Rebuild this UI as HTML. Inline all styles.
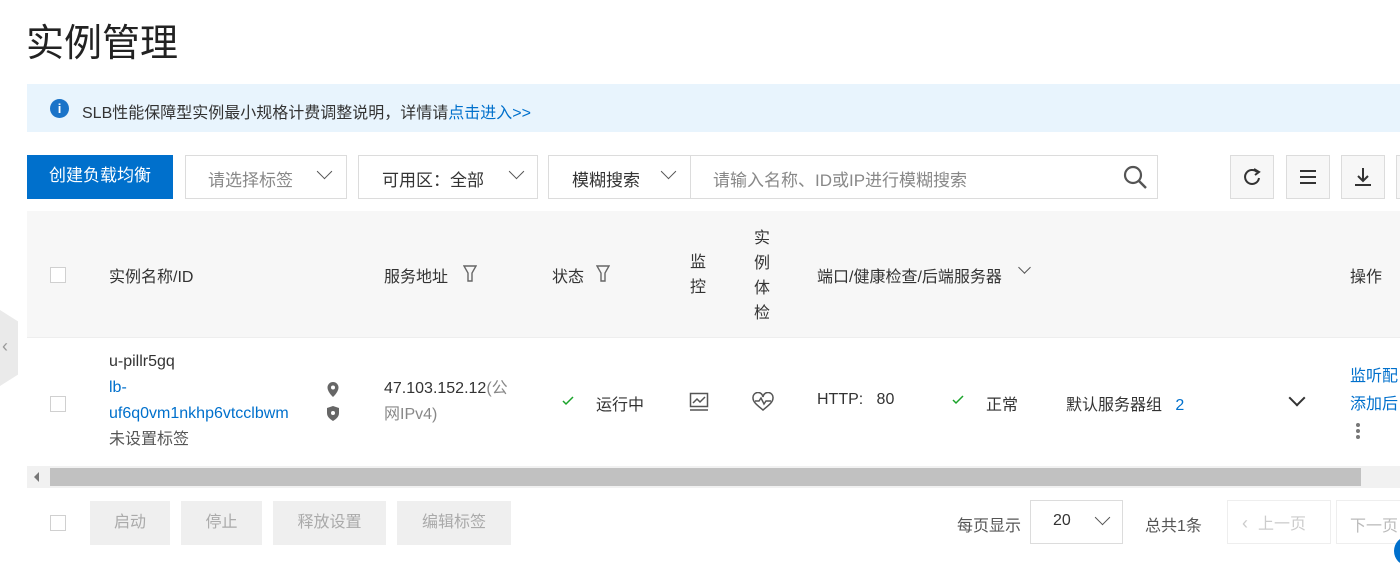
<!DOCTYPE html>
<html><head><meta charset="utf-8"><style>
body{margin:0;width:1400px;height:575px;overflow:hidden;background:#fff;font-family:"Liberation Sans","Noto Sans CJK SC",sans-serif;color:#333;position:relative}
.a{position:absolute;white-space:nowrap}
.box{position:absolute;border:1px solid #dcdcdc;box-sizing:border-box;background:#fff}
.chev{position:absolute;width:10px;height:10px;border-right:1.6px solid #555;border-bottom:1.6px solid #555;transform:rotate(45deg)}
.btn{position:absolute;background:#efefef;color:#aaa;font-size:16px;text-align:center;line-height:44px;height:44px;top:501px}
.cb{position:absolute;width:14px;height:14px;border:1px solid #d0d0d0;background:#fff}
</style></head><body>
<div class="a" style="left:26px;top:12px;font-size:38px;color:#222">实例管理</div>
<div class="a" style="left:27px;top:84px;width:1373px;height:48px;background:#e8f4fd"></div>
<div class="a" style="left:50px;top:99px;width:19px;height:19px;border-radius:50%;background:#1a73c8;color:#fff;font-size:13px;font-weight:bold;text-align:center;line-height:19px">i</div>
<div class="a" style="left:82px;top:99px;font-size:16px;color:#333">SLB性能保障型实例最小规格计费调整说明，详情请<span style="color:#0070cc">点击进入&gt;&gt;</span></div>

<div class="a" style="left:27px;top:155px;width:146px;height:44px;background:#0070cc;color:#fff;font-size:17px;line-height:42px;text-align:center">创建负载均衡</div>
<div class="box" style="left:185px;top:155px;width:162px;height:44px"></div>
<div class="a" style="left:208px;top:166px;font-size:17px;color:#888">请选择标签</div>
<div class="chev" style="left:319px;top:166px"></div>
<div class="box" style="left:358px;top:155px;width:180px;height:44px"></div>
<div class="a" style="left:382px;top:166px;font-size:17px;color:#333">可用区：全部</div>
<div class="chev" style="left:511px;top:166px"></div>
<div class="box" style="left:548px;top:155px;width:610px;height:44px"></div>
<div class="a" style="left:690px;top:156px;width:1px;height:42px;background:#dcdcdc"></div>
<div class="a" style="left:572px;top:166px;font-size:17px;color:#333">模糊搜索</div>
<div class="chev" style="left:663px;top:166px"></div>
<div class="a" style="left:713px;top:166px;font-size:17px;color:#888">请输入名称、ID或IP进行模糊搜索</div>
<svg class="a" style="left:1122px;top:164px" width="26" height="26"><circle cx="11" cy="11" r="8" fill="none" stroke="#555" stroke-width="2.2"/><line x1="17" y1="17" x2="24" y2="24" stroke="#555" stroke-width="2.4"/></svg>
<div class="box" style="left:1230px;top:155px;width:44px;height:44px;background:#f7f7f7"></div>
<svg class="a" style="left:1242px;top:167px" width="20" height="20"><path d="M15 5 A7 7 0 1 0 17 11" fill="none" stroke="#333" stroke-width="2"/><path d="M12 2 L17 5 L13 8" fill="none" stroke="#333" stroke-width="2"/></svg>
<div class="box" style="left:1286px;top:155px;width:44px;height:44px;background:#f7f7f7"></div>
<div class="a" style="left:1300px;top:170px;width:16px;height:2px;background:#333;box-shadow:0 6px 0 #333,0 12px 0 #333"></div>
<div class="box" style="left:1341px;top:155px;width:44px;height:44px;background:#f7f7f7"></div>
<svg class="a" style="left:1353px;top:166px" width="20" height="22"><path d="M10 2V15M5 10l5 5 5-5M2 19h16" fill="none" stroke="#333" stroke-width="2"/></svg>
<div class="box" style="left:1396px;top:155px;width:10px;height:44px;background:#f7f7f7"></div>

<div class="a" style="left:27px;top:211px;width:1373px;height:126px;background:#f7f7f7;border-bottom:1px solid #eee"></div>
<div class="cb" style="left:50px;top:267px"></div>
<div class="a" style="left:109px;top:263px;font-size:16px">实例名称/ID</div>
<div class="a" style="left:384px;top:263px;font-size:16px">服务地址</div>
<svg class="a" style="left:463px;top:265px" width="14" height="20"><path d="M1 1h12l-4 7v8h-4v-8z" fill="none" stroke="#666" stroke-width="1.4"/></svg>
<div class="a" style="left:552px;top:263px;font-size:16px">状态</div>
<svg class="a" style="left:596px;top:265px" width="14" height="20"><path d="M1 1h12l-4 7v8h-4v-8z" fill="none" stroke="#666" stroke-width="1.4"/></svg>
<div class="a" style="left:690px;top:250px;font-size:16px;line-height:25px;white-space:normal;width:18px">监控</div>
<div class="a" style="left:754px;top:226px;font-size:16px;line-height:25px;white-space:normal;width:18px">实例体检</div>
<div class="a" style="left:817px;top:263px;font-size:16px">端口/健康检查/后端服务器</div>
<div class="chev" style="left:1020px;top:263px;width:8px;height:8px"></div>
<div class="a" style="left:1350px;top:263px;font-size:16px">操作</div>

<div class="a" style="left:0;top:310px;width:18px;height:76px;background:#eaeaea;clip-path:polygon(0 0,100% 15%,100% 85%,0 100%)"></div>
<div class="a" style="left:2px;top:336px;font-size:18px;color:#999">‹</div>

<div class="cb" style="left:50px;top:396px"></div>
<div class="a" style="left:109px;top:349px;font-size:16px;line-height:26px;color:#333">u-pillr5gq<br><span style="color:#0070cc">lb-<br>uf6q0vm1nkhp6vtcclbwm</span><br><span style="color:#555">未设置标签</span></div>
<svg class="a" style="left:325px;top:381px" width="16" height="42"><path d="M8 1a5.5 5.5 0 0 0-5.5 5.5C2.5 11 8 16 8 16s5.5-5 5.5-9.5A5.5 5.5 0 0 0 8 1z" fill="#666"/><circle cx="8" cy="6.5" r="2" fill="#fff"/><path d="M8 25l6 2v5c0 4-3 6-6 8-3-2-6-4-6-8v-5z" fill="#666"/><circle cx="8" cy="32" r="2" fill="#fff"/></svg>
<div class="a" style="left:384px;top:376px;font-size:16px;line-height:26px">47.103.152.12<span style="color:#888">(公<br>网IPv4)</span></div>
<svg class="a" style="left:562px;top:396px" width="12" height="10"><path d="M1 5l3 3 7-7" fill="none" stroke="#1aa32a" stroke-width="1.5"/></svg>
<div class="a" style="left:596px;top:391px;font-size:16px">运行中</div>
<svg class="a" style="left:689px;top:392px" width="20" height="20"><rect x="1.5" y="1.5" width="17" height="13" fill="none" stroke="#555" stroke-width="1.5"/><path d="M4 11l4-4 3 3 5-5M1 18h18" fill="none" stroke="#555" stroke-width="1.5"/></svg>
<svg class="a" style="left:752px;top:392px" width="22" height="20"><path d="M11 18C5 13 1 10 1 6a5 5 0 0 1 10-1 5 5 0 0 1 10 1c0 4-4 7-10 12z" fill="none" stroke="#555" stroke-width="1.5"/><path d="M3 9h4l2-3 3 6 2-3h5" fill="none" stroke="#555" stroke-width="1.5"/></svg>
<div class="a" style="left:817px;top:391px;font-size:16px">HTTP:&nbsp;&nbsp; 80</div>
<svg class="a" style="left:952px;top:395px" width="12" height="10"><path d="M1 5l3 3 7-7" fill="none" stroke="#1aa32a" stroke-width="1.5"/></svg>
<div class="a" style="left:986px;top:391px;font-size:16px">正常</div>
<div class="a" style="left:1066px;top:391px;font-size:16px">默认服务器组 &nbsp; <span style="color:#0070cc">2</span></div>
<div class="chev" style="left:1291px;top:392px;width:10px;height:10px;border-width:2px;border-color:#333"></div>
<div class="a" style="left:1350px;top:363px;font-size:16px;line-height:28px;color:#0070cc">监听配<br>添加后</div>
<div class="a" style="left:1356px;top:423px;width:4px;height:4px;border-radius:50%;background:#777;box-shadow:0 6px 0 #777,0 12px 0 #777"></div>

<div class="a" style="left:27px;top:466px;width:1373px;height:22px;background:#f1f1f1"></div>
<div class="a" style="left:50px;top:468px;width:1311px;height:18px;background:#c1c1c1"></div>
<div class="a" style="left:34px;top:472px;width:0;height:0;border:5px solid transparent;border-right-color:#777;border-left:0"></div>

<div class="cb" style="left:50px;top:515px"></div>
<div class="btn" style="left:90px;width:80px">启动</div>
<div class="btn" style="left:181px;width:81px">停止</div>
<div class="btn" style="left:273px;width:113px">释放设置</div>
<div class="btn" style="left:397px;width:114px">编辑标签</div>
<div class="a" style="left:957px;top:512px;font-size:16px;color:#555">每页显示</div>
<div class="box" style="left:1030px;top:500px;width:93px;height:44px"></div>
<div class="a" style="left:1053px;top:512px;font-size:16px">20</div>
<div class="chev" style="left:1097px;top:512px"></div>
<div class="a" style="left:1145px;top:512px;font-size:16px;color:#555">总共1条</div>
<div class="box" style="left:1227px;top:500px;width:104px;height:44px;border-color:#eee"></div>
<div class="a" style="left:1242px;top:510px;font-size:18px;color:#ccc">‹ &nbsp;<span style="font-size:16px">上一页</span></div>
<div class="box" style="left:1336px;top:500px;width:80px;height:44px;border-color:#eee"></div>
<div class="a" style="left:1350px;top:512px;font-size:16px;color:#bbb">下一页</div>
<div class="a" style="left:1394px;top:536px;width:30px;height:30px;border-radius:50%;background:#0070cc"></div>
</body></html>
